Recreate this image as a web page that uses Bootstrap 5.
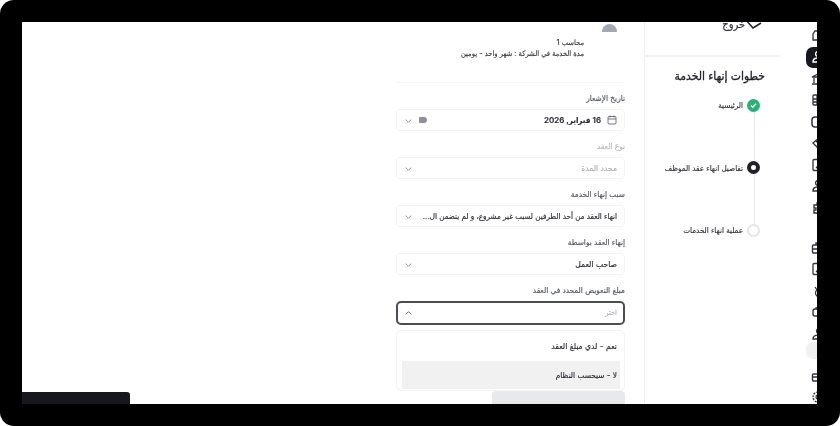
<!DOCTYPE html>
<html lang="ar" dir="rtl">
<head>
<meta charset="utf-8">
<title>خطوات إنهاء الخدمة</title>
<link rel="stylesheet" href="https://cdn.jsdelivr.net/npm/bootstrap@5.3.0/dist/css/bootstrap.min.css">
<style>
html,body{margin:0;width:840px;height:426px;overflow:hidden;background:#fff}
body{font-family:Inter,"DejaVu Sans Condensed","DejaVu Sans",sans-serif;font-stretch:condensed;color:#2a2c33;-webkit-text-stroke:.15px currentColor}
.frame{width:840px;height:426px;background:#000;border-radius:14px;padding:22px 23px 22px 22px}
.screen{width:795px;height:382px;background:#fff;overflow:hidden;position:relative;filter:blur(.3px)}
.rail{width:11px;flex:none;overflow:hidden;direction:ltr}
.rail-in{width:30px;padding-top:3px;display:flex;flex-direction:column;align-items:flex-start}
.rail-item{width:30px;height:21.500px;display:flex;align-items:center;padding-left:5px;color:#33353b;border-radius:7px;flex:none}
.rail-item svg{width:14px;height:14px;flex:none}
.rail-item.on{background:#16181d;color:#fff}
.rail-item.soft{background:#f1f1f2;height:17px;margin-top:-3px;margin-bottom:6.500px}
.rail-gap{height:18.500px;flex:none}
.steps{width:162px;flex:none;padding-right:26px;border-left:1px solid #eeeff1}
.exit{height:35px;border-bottom:2px solid #f1f2f3;position:relative;margin-left:-1px}
.exit-t{position:absolute;right:35px;top:-5px;font-size:11px;line-height:14px;white-space:nowrap}
.exit svg{position:absolute;right:16px;top:-3px;width:20px;height:12px}
.steps-h{font-size:12px;font-weight:500;color:#1f2126;margin:11px 0 0;padding-right:15px;line-height:16px;white-space:nowrap;-webkit-text-stroke:.3px currentColor}
.step-list{padding-right:20px;margin-top:15px}
.step{display:flex;align-items:center;gap:4px;font-size:8px;line-height:12px;white-space:nowrap;color:#33353b;height:12px}
.dot{width:13px;height:13px;border-radius:50%;flex:none;display:flex;align-items:center;justify-content:center}
.dot.done{background:#22b573}
.dot.cur{background:#fff;border:4px solid #202228}
.dot.next{background:#fff;border:2px solid #e4e5e8}
.vline{width:1px;height:50.500px;background:#e8e9eb;margin-right:5px}
.form-col{width:229px;flex:none;margin-right:19px}
.avatar{width:15px;height:8px;background:#a3a8b4;border-radius:8px 8px 0 0;margin:2px 8px 0 0}
.who{font-size:7.500px;line-height:11px;text-align:right;padding-right:41px;margin-top:5px;white-space:nowrap;color:#3a3c42}
.sep{height:1px;background:#f6f6f7;margin-top:23px}
.fld-l{font-size:8.200px;line-height:11px;color:#55585f;margin-top:10px;margin-bottom:5px;white-space:nowrap}
.fld-l.off{color:#b6b8bd}
.fld{height:22px;border:1px solid #f3f4f5;border-radius:4px;display:flex;align-items:center;padding:0 7px;font-size:8.500px;color:#2a2c33;white-space:nowrap;gap:6px;background:#fff}
.fld.off{color:#aeb0b5}
.fld.long{font-size:8px}
.fld.open{border:2px solid #4b4d52;height:24px;border-radius:5px;color:#b2b4b9;font-size:7.500px;padding:0 6px}
.chev{width:9px;height:9px;color:#8d9096;flex:none;margin-right:auto;-webkit-text-stroke:0}
.cal{width:10px;height:10px;color:#55585f;flex:none}
.when{font-size:8px;font-weight:600;font-family:Inter,"DejaVu Sans Condensed",sans-serif}
.tag{width:8px;height:6px;background:#8d9096;border-radius:1px 3px 3px 1px;flex:none;margin-right:auto}
.fld .tail{margin-right:0}
.menu{margin-top:5px;border:1px solid #f3f4f5;border-radius:5px;padding:0 4px 2px 5px;height:61px;background:#fff}
.opt{height:28px;display:flex;align-items:center;font-size:8.500px;padding:0 3px;white-space:nowrap}
.opt.sel{background:#f1f1f2;font-size:8.200px}
.opt.plain{height:30px}
.under{width:133px;height:14px;background:#e8e9eb;border-radius:4px 4px 0 0}
.dock{position:absolute;left:0;bottom:0;width:108px;height:12px;background:#16181d;border-radius:0 3px 0 0}
</style>
</head>
<body>
<div class="frame">
<div class="screen d-flex">
  <div class="rail">
    <div class="rail-in">
      <div class="rail-item"><svg viewBox="0 0 14 14" fill="none" stroke="currentColor" stroke-width="1.3"><path d="M2 11V5l2-3h8v9zM2 11h10"/></svg></div>
      <div class="rail-item on"><svg viewBox="0 0 14 14" fill="none" stroke="currentColor" stroke-width="1.4"><circle cx="7" cy="4" r="2.4"/><path d="M2 12c0-3 2-4 5-4s5 1 5 4z"/></svg></div>
      <div class="rail-item"><svg viewBox="0 0 14 14" fill="none" stroke="currentColor" stroke-width="1.3"><path d="M1 5l6-3 6 3zM3 6v5M7 6v5M11 6v5M1 12h12"/></svg></div>
      <div class="rail-item"><svg viewBox="0 0 14 14" fill="none" stroke="currentColor" stroke-width="1.3"><rect x="2" y="2" width="10" height="10" rx="1"/><path d="M2 6h10M2 9h10M6 2v10"/></svg></div>
      <div class="rail-item"><svg viewBox="0 0 14 14" fill="none" stroke="currentColor" stroke-width="1.5"><rect x="1" y="2" width="12" height="10" rx="3"/><circle cx="9" cy="7" r="1.5" fill="currentColor"/></svg></div>
      <div class="rail-item"><svg viewBox="0 0 14 14" fill="none" stroke="currentColor" stroke-width="1.3"><path d="M2 7l6-5 4 4-5 6zM5 5l4 4"/></svg></div>
      <div class="rail-item"><svg viewBox="0 0 14 14" fill="none" stroke="currentColor" stroke-width="1.3"><rect x="2" y="1.500" width="10" height="11" rx="1"/><path d="M5 10l2-2 2 2"/></svg></div>
      <div class="rail-item"><svg viewBox="0 0 14 14" fill="none" stroke="currentColor" stroke-width="1.4"><circle cx="7" cy="4" r="2.4"/><path d="M2 12c0-3 2-4 5-4s5 1 5 4z"/></svg></div>
      <div class="rail-item"><svg viewBox="0 0 14 14" fill="none" stroke="currentColor" stroke-width="1.4"><path d="M3 4h3V2h2v2h3v3h2v2h-2v3H3V9h2V7H3z"/></svg></div>
      <div class="rail-gap"></div>
      <div class="rail-item"><svg viewBox="0 0 14 14" fill="none" stroke="currentColor" stroke-width="1.4"><rect x="1.500" y="4" width="11" height="8" rx="1"/><path d="M5 4V2h4v2M1.500 8h11"/></svg></div>
      <div class="rail-item"><svg viewBox="0 0 14 14" fill="none" stroke="currentColor" stroke-width="1.3"><rect x="2" y="1.500" width="10" height="11" rx="1"/><path d="M5 10l2-2 2 2"/></svg></div>
      <div class="rail-item"><svg viewBox="0 0 14 14" fill="none" stroke="currentColor" stroke-width="1.3"><circle cx="8" cy="9" r="3.500"/><path d="M4 3l2 3M8 2l1 3"/></svg></div>
      <div class="rail-item"><svg viewBox="0 0 14 14" fill="none" stroke="currentColor" stroke-width="1.4"><rect x="2" y="4" width="10" height="7" rx="2"/><path d="M5 4V3h4v1"/></svg></div>
      <div class="rail-item"><svg viewBox="0 0 14 14" fill="none" stroke="currentColor" stroke-width="1.4"><circle cx="8" cy="4" r="2.400"/><path d="M2 12c0-3 2-4 6-4s4 1 4 4z"/></svg></div>
      <div class="rail-item soft"></div>
      <div class="rail-item"><svg viewBox="0 0 14 14" fill="none" stroke="currentColor" stroke-width="1.4"><rect x="1.500" y="5" width="11" height="7" rx="1"/><path d="M1.500 8h11M7 5V3"/></svg></div>
      <div class="rail-item"><svg viewBox="0 0 14 14" fill="none" stroke="currentColor" stroke-width="1.3"><circle cx="7" cy="7" r="2"/><circle cx="7" cy="7" r="5" stroke-dasharray="2 1"/></svg></div>
    </div>
  </div>
  <div class="steps">
    <div class="exit">
      <span class="exit-t">خروج</span>
      <svg viewBox="0 0 20 12" fill="none" stroke="#202228" stroke-width="1.500"><path d="M2 1l7 8 8-5"/></svg>
    </div>
    <h2 class="steps-h">خطوات إنهاء الخدمة</h2>
    <div class="step-list">
      <div class="step"><span class="dot done"><svg width="7" height="7" viewBox="0 0 8 8" fill="none" stroke="#fff" stroke-width="1.500"><path d="M1 4l2 2 4-4"/></svg></span>الرئيسية</div>
      <div class="vline"></div>
      <div class="step"><span class="dot cur"></span>تفاصيل انهاء عقد الموظف</div>
      <div class="vline"></div>
      <div class="step"><span class="dot next"></span>عملية انهاء الخدمات</div>
    </div>
  </div>
  <div class="form-col">
    <div class="avatar"></div>
    <div class="who"><div>محاسب 1</div><div>مدة الخدمة في الشركة : شهر واحد - يومين</div></div>
    <div class="sep"></div>
    <div class="fld-l">تاريخ الإشعار</div>
    <div class="fld"><svg class="cal" viewBox="0 0 10 10" fill="none" stroke="currentColor" stroke-width=".8"><rect x="1" y="1.500" width="8" height="7.500" rx="1"/><path d="M1 4h8M3 .5v2M7 .5v2"/></svg><span class="when">16 فبراير, 2026</span><span class="tag"></span><svg class="chev tail" viewBox="0 0 10 10" fill="none" stroke="currentColor"><path d="M2 4l3 3 3-3"/></svg></div>
    <div class="fld-l off">نوع العقد</div>
    <div class="fld off">محدد المدة<svg class="chev" viewBox="0 0 10 10" fill="none" stroke="currentColor"><path d="M2 4l3 3 3-3"/></svg></div>
    <div class="fld-l">سبب إنهاء الخدمة</div>
    <div class="fld long">انهاء العقد من أحد الطرفين لسبب غير مشروع، و لم يتضمن ال...<svg class="chev" viewBox="0 0 10 10" fill="none" stroke="currentColor"><path d="M2 4l3 3 3-3"/></svg></div>
    <div class="fld-l">إنهاء العقد بواسطة</div>
    <div class="fld">صاحب العمل<svg class="chev" viewBox="0 0 10 10" fill="none" stroke="currentColor"><path d="M2 4l3 3 3-3"/></svg></div>
    <div class="fld-l">مبلغ التعويض المحدد في العقد</div>
    <div class="fld open">اختر<svg class="chev" viewBox="0 0 10 10" fill="none" stroke="#55585f"><path d="M2 6l3-3 3 3"/></svg></div>
    <div class="menu">
      <div class="opt plain">نعم - لدي مبلغ العقد</div>
      <div class="opt sel">لا - سيحسب النظام</div>
    </div>
    <div class="under"></div>
  </div>
  <div class="dock"></div>
</div>
</div>
</body>
</html>
